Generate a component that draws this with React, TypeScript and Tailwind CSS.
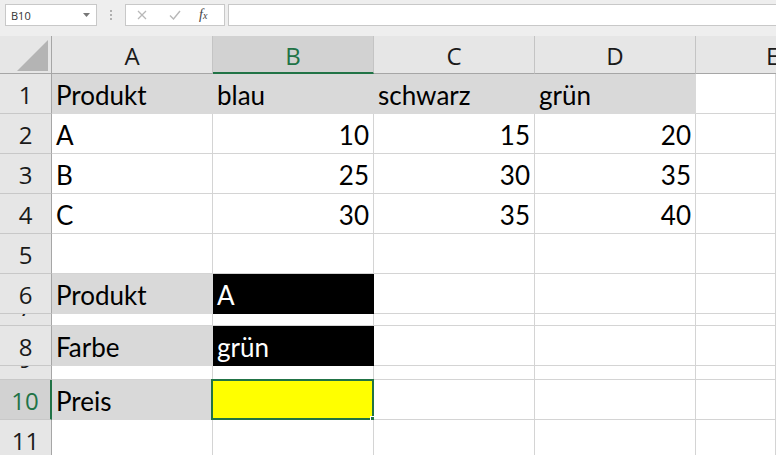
import React from "react";

type Fill = "gray" | "black" | "yellow";
type Cell = { v?: string; num?: boolean; fill?: Fill; selected?: boolean };
type Row = { n: number; h: string; short?: boolean; cells: Cell[] };

const COLS = ["A", "B", "C", "D", "E"];
const UI = { fontFamily: '"Open Sans", "Noto Sans", sans-serif' };
const CELL = { fontFamily: 'Lato, "Open Sans", sans-serif' };

const rows: Row[] = [
  {
    n: 1,
    h: "h-[40px]",
    cells: [
      { v: "Produkt", fill: "gray" },
      { v: "blau", fill: "gray" },
      { v: "schwarz", fill: "gray" },
      { v: "grün", fill: "gray" },
    ],
  },
  { n: 2, h: "h-[40px]", cells: [{ v: "A" }, { v: "10", num: true }, { v: "15", num: true }, { v: "20", num: true }] },
  { n: 3, h: "h-[40px]", cells: [{ v: "B" }, { v: "25", num: true }, { v: "30", num: true }, { v: "35", num: true }] },
  { n: 4, h: "h-[40px]", cells: [{ v: "C" }, { v: "30", num: true }, { v: "35", num: true }, { v: "40", num: true }] },
  { n: 5, h: "h-[40px]", cells: [] },
  { n: 6, h: "h-[40px]", cells: [{ v: "Produkt", fill: "gray" }, { v: "A", fill: "black" }] },
  { n: 7, h: "h-[12px]", short: true, cells: [] },
  { n: 8, h: "h-[40px]", cells: [{ v: "Farbe", fill: "gray" }, { v: "grün", fill: "black" }] },
  { n: 9, h: "h-[14px]", short: true, cells: [] },
  { n: 10, h: "h-[40px]", cells: [{ v: "Preis", fill: "gray" }, { fill: "yellow", selected: true }] },
  { n: 11, h: "h-[40px]", cells: [] },
];

function fillClass(fill?: Fill) {
  if (fill === "gray") return "bg-[#d9d9d9] border-[#d9d9d9] text-black";
  if (fill === "black") return "bg-black border-black text-white";
  if (fill === "yellow") return "bg-[#ffff00] border-[#ffff00] text-black";
  return "bg-white border-[#d4d4d4] text-black";
}

function FormulaBar() {
  return (
    <div className="h-[36px] bg-[#eeeeee] flex items-start pt-[4px] pl-[5px]" style={UI}>
      {/* name box */}
      <div className="w-[92px] h-[22px] bg-white border border-[#c8c8c8] flex items-center justify-between pl-[5px] pr-[6px]">
        <span className="text-[11px] text-[#333] leading-none">B10</span>
        <svg width="7" height="4" viewBox="0 0 7 4">
          <path d="M0 0h7L3.5 4z" fill="#777" />
        </svg>
      </div>
      <div className="w-[28px] h-[22px] flex flex-col items-center justify-center gap-[2px]">
        <span className="w-[2px] h-[2px] bg-[#b0b0b0]" />
        <span className="w-[2px] h-[2px] bg-[#b0b0b0]" />
        <span className="w-[2px] h-[2px] bg-[#b0b0b0]" />
      </div>
      {/* cancel / enter / fx */}
      <div className="w-[100px] h-[22px] bg-white border border-[#c8c8c8] flex items-center">
        <svg className="ml-[11px]" width="10" height="10" viewBox="0 0 10 10">
          <path d="M1 1l8 8M9 1l-8 8" stroke="#b8b8b8" strokeWidth="1.3" />
        </svg>
        <svg className="ml-[22px]" width="12" height="10" viewBox="0 0 12 10">
          <path d="M1 5.5l3.5 3.5L11 1" stroke="#b8b8b8" strokeWidth="1.4" fill="none" />
        </svg>
        <span
          className="ml-[18px] italic text-[14px] leading-none text-[#444]"
          style={{ fontFamily: '"Liberation Serif", serif' }}
        >
          f<span className="text-[10px]">x</span>
        </span>
      </div>
      <div className="ml-[3px] flex-1 h-[22px] bg-white border border-r-0 border-[#c8c8c8]" />
    </div>
  );
}

function HeaderRow() {
  return (
    <div className="flex h-[38px] bg-[#e6e6e6]" style={UI}>
      <div className="w-[52px] shrink-0 border-r border-b border-[#a6a6a6] flex items-end justify-end pr-[3px] pb-[2px]">
        <svg width="31" height="31" viewBox="0 0 31 31">
          <path d="M31 0V31H0z" fill="#b4b4b4" />
        </svg>
      </div>
      {COLS.map((c, i) => {
        const sel = c === "B";
        const last = i === COLS.length - 1;
        return (
          <div
            key={c}
            className={`${last ? "flex-1" : "w-[161px] shrink-0 border-r border-r-[#c4c4c4]"} ${
              sel
                ? "bg-[#d2d2d2] border-b-2 border-b-[#217346] text-[#217346]"
                : "border-b border-b-[#a6a6a6] text-[#1a1a1a]"
            } ${last ? "pl-[70px]" : "text-center"} pt-[8px] text-[24px] leading-[24px]`}
          >
            {c}
          </div>
        );
      })}
    </div>
  );
}

function DataRow({ row }: { row: Row }) {
  const selRow = row.n === 10;
  return (
    <div className={`flex ${row.h}`}>
      <div
        className={`w-[52px] shrink-0 overflow-hidden text-center border-b border-b-[#c8c8c8] ${
          selRow
            ? "bg-[#d2d2d2] border-r-2 border-r-[#217346] text-[#217346]"
            : "bg-[#e6e6e6] border-r border-r-[#a6a6a6] text-[#1a1a1a]"
        }`}
        style={UI}
      >
        <div className={`text-[24px] leading-[24px] ${row.short ? "-mt-[19px]" : "mt-[9px]"}`}>{row.n}</div>
      </div>
      {[0, 1, 2, 3, 4].map((i) => {
        const cell = row.cells[i] || {};
        const last = i === 4;
        return (
          <div
            key={i}
            className={`${last ? "flex-1" : "w-[161px] shrink-0"} relative border-r border-b ${fillClass(
              cell.fill
            )} px-[4px] pt-[5px] text-[26px] leading-[32px] whitespace-nowrap ${
              cell.num ? "text-right" : "text-left"
            } ${cell.selected ? "" : "overflow-hidden"}`}
            style={CELL}
          >
            {cell.v}
            {cell.selected && (
              <div className="absolute -left-[2px] -top-[1px] -right-[1px] -bottom-[1px] border-2 border-[#217346]">
                <div className="absolute -right-[4px] -bottom-[4px] w-[6px] h-[6px] bg-[#217346] border border-white" />
              </div>
            )}
          </div>
        );
      })}
    </div>
  );
}

export default function App() {
  return (
    <div className="w-[776px] h-[455px] overflow-hidden bg-white">
      <FormulaBar />
      <HeaderRow />
      {rows.map((r) => (
        <DataRow key={r.n} row={r} />
      ))}
    </div>
  );
}
